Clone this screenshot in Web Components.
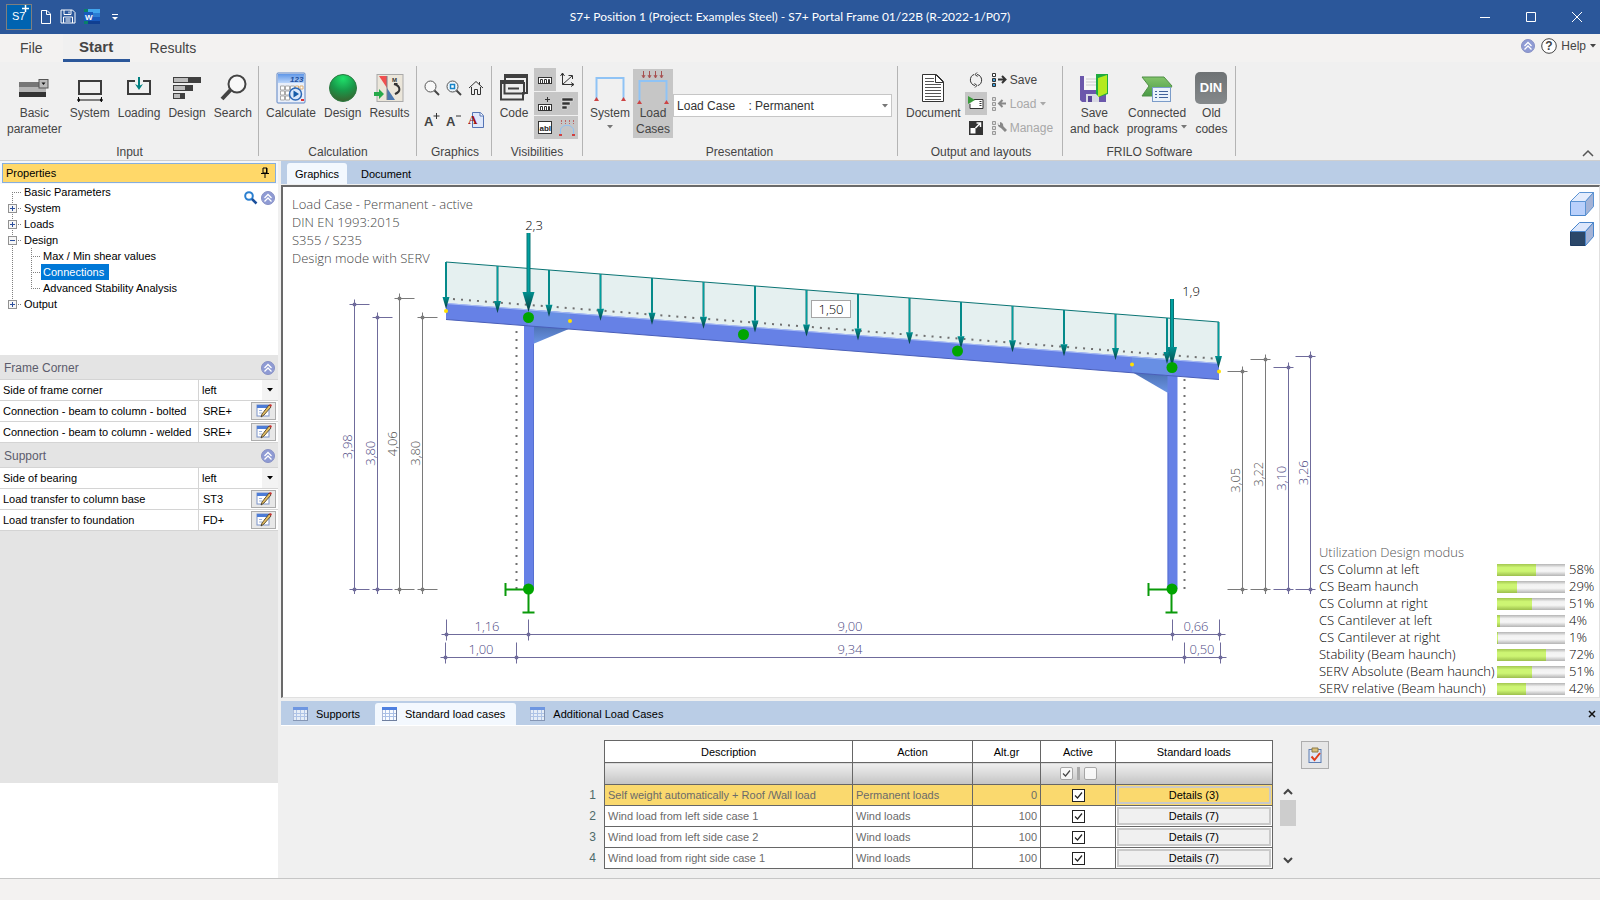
<!DOCTYPE html>
<html lang="en">
<head>
<meta charset="utf-8">
<title>S7+ Portal Frame</title>
<style>
  html, body {
    margin: 0;
    height: 100%;
  }
  body {
    background: #f0f0f0;
    color: #444;
    font: 12px/16px "Liberation Sans", Arial, sans-serif;
  }
</style>
</head>
<body>
<portal-app></portal-app>

<script>
const ICONS = {
  app: [26, 26, `<rect x=".5" y=".5" width="25" height="25" fill="#0063b1" stroke="#7f7f7f"/><text x="6" y="16" font-size="11" fill="#fff">S7</text><path d="M19.500 1v7M16 4.500h7" stroke="#fff" stroke-width="1.500"/>`],
  page: [12, 16, `<path d="M1.500 1.500h5.500l3.500 3.500v9.500h-9zM6.500 1.500v4h4" fill="none" stroke="#fff"/>`],
  disk: [16, 16, `<path d="M1 1h11.500l2.500 2.500V14H1zM4 1v4.500h7V1M9 2.500v2M3.500 14V8h9v6M5.500 10h5M5.500 12h5" fill="none" stroke="#fff"/>`],
  word: [16, 16, `<path d="M4 0h12v4H4z" fill="#41a5ee"/><path d="M4 4h12v4H4z" fill="#2b7cd3"/><path d="M4 8h12v4H4z" fill="#185abd"/><path d="M4 12h12v3H4z" fill="#103f91"/><path d="M0 0h4v3H0zM0 12h4v3H0z" fill="#0a8069"/><path d="M0 3h9v9H0z" fill="#185abd"/><text x="1" y="11" font-size="8" font-weight="bold" fill="#fff">W</text>`],
  quick: [6, 6, `<path d="M0 .500h6" stroke="#fff"/><path d="M0 3h6l-3 3z" fill="#fff"/>`],
  min: [10, 10, `<path d="M0 5.500h10" stroke="#fff"/>`],
  max: [10, 10, `<path d="M.5.500h9v9h-9z" fill="none" stroke="#fff"/>`],
  close: [10, 10, `<path d="M0 0l10 10M10 0L0 10" stroke="#fff"/>`],
  up: [14, 14, `<circle cx="7" cy="7" r="6.500" fill="#8f9bd4" stroke="#8790c4"/><path d="M3.500 7L7 3.500 10.500 7M3.500 10.500L7 7l3.500 3.500" fill="none" stroke="#fff" stroke-width="1.300"/>`],
  help: [16, 16, `<circle cx="8" cy="8" r="7.300" fill="#fff" stroke="#444"/><text x="8" y="12" font-size="12" font-weight="bold" text-anchor="middle" fill="#444">?</text>`],
  drop: [6, 4, `<path d="M0 0h6L3 3.500z" fill="currentColor"/>`],
  basic: [32, 32, `<path d="M1 10h27v5H1z" fill="#767676"/><path d="M1 15h27v5H1z" fill="#b5b5b5"/><path d="M1 20h27v5H1z" fill="#333"/><rect x="21" y="7.500" width="9" height="8.500" fill="#bbb" stroke="#555"/><path d="M23.500 10.500h4l-2 2.500z" fill="#111"/>`],
  system: [32, 32, `<rect x="5" y="9" width="22" height="13" fill="none" stroke="#3c3c3c" stroke-width="2"/><path d="M3 28h26M4.500 25v5M27.500 25v5" stroke="#111" stroke-width="1"/><path d="M3 28l3-1.500v3zM29 28l-3-1.500v3z" fill="#111"/>`],
  loading: [32, 32, `<path d="M12 9H5v13h22V9h-7" fill="none" stroke="#3c3c3c" stroke-width="2"/><path d="M16 5v10" stroke="#008080" stroke-width="2"/><path d="M12 12l4 2 4-2-4 6z" fill="#008080"/>`],
  design: [32, 32, `<path d="M2 5h28v6H2zM2 13h20v6H2zM2 21h12v6H2z" fill="#404040"/><path d="M3 6h14v4H3zM3 14h11v4H3zM3 22h6v4H3z" fill="#bcbcbc"/>`],
  search: [32, 32, `<circle cx="20" cy="12" r="8.500" fill="#f8f8f8" stroke="#444" stroke-width="2"/><path d="M13.500 18L5 27" stroke="#444" stroke-width="4"/>`],
  calculate: [32, 32, `<defs><linearGradient id="c" x2="0" y2="1"><stop stop-color="#5f97e8"/><stop offset="1" stop-color="#bcd6fa"/></linearGradient></defs><rect x="2" y="1" width="28" height="30" rx="1" fill="#e9effa" stroke="#5c84c4"/><path d="M3 2h26v9H3z" fill="url(#c)"/><text x="15" y="10" font-size="8" font-weight="bold" fill="#234f9c" font-style="italic">123</text><path d="M5.500 14h4v4h-4zM10.500 14h4v4h-4zM15.500 14h4v4h-4zM5.500 19h4v4h-4zM10.500 19h4v4h-4zM5.500 24h4v4h-4zM10.500 24h4v4h-4z" fill="#fff" stroke="#a9a9a9"/><path d="M20.500 14h3v3h-3zM25 14h3v3h-3z" fill="#fff" stroke="#dcae74"/><path d="M26 27h3v2h-3z" fill="#d33"/><circle cx="20.500" cy="22" r="6" fill="#d7e6fa" stroke="#2c67b4" stroke-width="1.500"/><path d="M18.500 18.500l5.500 3.500-5.500 3.500z" fill="#155ba8"/>`],
  ball: [32, 32, `<defs><radialGradient id="b" cx=".5" cy=".15" r=".9"><stop stop-color="#1fe06a"/><stop offset=".5" stop-color="#189a4a"/><stop offset="1" stop-color="#3d5c2c"/></radialGradient></defs><circle cx="16" cy="16" r="13.500" fill="url(#b)" stroke="#2b7a41"/>`],
  results: [32, 32, `<rect x="4" y="2.500" width="26" height="27" fill="#ebe6da" stroke="#aaa"/><path d="M6 4h8v12z" fill="#f04f4f"/><path d="M14 16l8 12h-8z" fill="#4b78b0"/><path d="M14 4v24" stroke="#7d7d8a"/><text x="19" y="10" font-size="6" font-weight="bold" fill="#333">M</text><path d="M21 12c7 2 7 8 1 10M21 12h3.500M22 22l3-2" fill="none" stroke="#333" stroke-width="2"/><path d="M1 20h5v-3l5 5-5 5v-3H1z" fill="#27a94a"/>`],
  zoomOut: [16, 16, `<circle cx="6.500" cy="6.500" r="5.500" fill="#f8f8f8" stroke="#555"/><path d="M10.500 10.500l4.500 4.500" stroke="#444" stroke-width="2"/>`],
  zoomFit: [16, 16, `<circle cx="6.500" cy="6.500" r="5.500" fill="#eef6fc" stroke="#555"/><path d="M10.500 10.500l4.500 4.500" stroke="#444" stroke-width="2"/><path d="M4.500 4.500h4v4h-4z" fill="#fff" stroke="#1584c8" stroke-width="1.500"/>`],
  home: [16, 16, `<path d="M1 8l7-6.500L15 8M3.500 7v7.500h3V9.500h3v5h3V7M11.500 2v3" fill="none" stroke="#333"/>`],
  fontUp: [16, 16, `<text x="0" y="14" font-size="13" font-weight="bold" fill="#444">A</text><path d="M12.500 1v6M9.500 4h6" stroke="#333"/>`],
  fontDown: [16, 16, `<text x="0" y="14" font-size="13" font-weight="bold" fill="#444">A</text><path d="M10 4h5" stroke="#333"/>`],
  fontPage: [16, 16, `<path d="M4.500.500h8l3 3v12h-11z" fill="#dfe8fb" stroke="#5574b5"/><path d="M12 .500v3.500h3.500" fill="#fff" stroke="#5574b5"/><text x="0" y="12" font-size="13" font-weight="bold" font-family="Liberation Serif, serif" fill="#a01010">A</text>`],
  code: [32, 32, `<path d="M6 2h24v20H26v-2h2V6H8v3H6z" fill="#404040"/><rect x="3" y="9.500" width="22" height="18" fill="#eee" stroke="#404040" stroke-width="2"/><path d="M2 8h24v4H2z" fill="#404040"/><path d="M6 12h21v8H6z" fill="#eee"/><path d="M6.500 10v11.500H26V10" fill="none" stroke="#404040" stroke-width="2"/><path d="M10 16.500h11" stroke="#404040" stroke-width="2"/>`],
  ruler: [16, 16, `<rect x="1.500" y="5.500" width="13" height="6" fill="#fff" stroke="#333"/><path d="M3.500 11V7.500h2V11M7.500 11V7.500h2V11M11.500 11V7.500h1V11" fill="none" stroke="#333"/>`],
  rulerPlus: [16, 16, `<rect x="1.500" y="8.500" width="13" height="6" fill="#fff" stroke="#333"/><path d="M3.500 14v-3.500h2V14M7.500 14v-3.500h2V14M11.500 14v-3.500h1V14" fill="none" stroke="#333"/><path d="M10.500 1v5M8 3.500h5" stroke="#333"/>`],
  axes: [16, 16, `<path d="M3.500 1v11.500H15M3.500 12.500L13 4M1.500 4l2-3 2 3M12 10.500l3 2-3 2M9.500 3.500H13.500V7" fill="none" stroke="#333"/>`],
  bars: [16, 16, `<path d="M3 2h11v3H3zM3 6h8v3H3zM3 10h5v3H3z" fill="#333" stroke="#eee" stroke-width=".5"/>`],
  abl: [16, 16, `<rect x="1.500" y="1.500" width="13" height="12" fill="#fff" stroke="#333"/><text x="2.500" y="11" font-size="8" font-weight="bold" fill="#222">abl</text>`],
  frameSmall: [16, 16, `<path d="M1.500 15V9c3-5 10-5 13 0v6" fill="none" stroke="#8fc3f5"/><path d="M2.500 0v4M6.500 0v4M10.500 0v4M14.500 0v4" stroke="#b66" stroke-dasharray="2 1"/><path d="M0 14h3v2H0zM13 14h3v2h-3z" fill="#d04040"/>`],
  frame: [32, 28, `<path d="M2.500 25V4h27V25" fill="none" stroke="#8fc3f5" stroke-width="2"/><path d="M0 27l2.500-4L5 27zM27 27l2.500-4L32 27z" fill="#c44"/>`],
  frameLoad: [32, 34, `<path d="M2.500 31V11h27V31" fill="none" stroke="#8fc3f5" stroke-width="2"/><path d="M0 34l2.500-4L5 34zM27 34l2.500-4L32 34z" fill="#c44"/><path d="M6.500 1v6M12.500 1v6M18.500 1v6M24.500 1v6M5 5l1.500 3L8 5M11 5l1.500 3L14 5M17 5l1.500 3L20 5M23 5l1.500 3L26 5" fill="none" stroke="#a75050"/>`],
  document: [32, 32, `<path d="M5.500 2.500h14l7 7v20h-21z" fill="#fff" stroke="#333"/><path d="M18.500 2.500v8h8z" fill="#fff" stroke="#333"/><path d="M8 6.500h9M8 9.500h9M8 12.500h16M8 15.500h16M8 18.500h16M8 21.500h16M8 24.500h16M8 27.500h16" stroke="#555"/>`],
  refresh: [16, 16, `<path d="M9 2.500c6 1 6 9.500 1 11M7 13.500c-6-1-6-9.500-1-11M9 .500L7 2.500l2.500 2M7 15.500l2-2-2.500-2" fill="none" stroke="#333"/>`],
  playFrame: [16, 16, `<path d="M6 3.500h9v9H2V8" fill="#fff" stroke="#333"/><path d="M12.500 5v6" stroke="#333" stroke-dasharray="1 1" stroke-width="2"/><path d="M0 0l7 4-7 4z" fill="#3b9b3b"/>`],
  expand: [16, 16, `<path d="M1 1h14v14H1z" fill="#333"/><path d="M2.500 8h5v5.500h-5z" fill="#fff"/><path d="M7.500 8l5-5M8.500 3h4v4" fill="none" stroke="#fff" stroke-width="1.500"/>`],
  saveList: [16, 16, `<path d="M1.500 1.500h3v3h-3z" fill="#fff" stroke="#333"/><path d="M1.500 6.500h3v3h-3zM1.500 11.500h3v3h-3z" fill="#3d9fdb" stroke="#333"/><path d="M7 7.500h7M11 4l3.500 3.500L11 11" fill="none" stroke="#333" stroke-width="2"/>`],
  loadList: [16, 16, `<path d="M1.500 1.500h3v3h-3zM1.500 6.500h3v3h-3zM1.500 11.500h3v3h-3z" fill="#ddd" stroke="#999"/><path d="M8 7.500h7M11.500 4L8 7.500l3.500 3.500" fill="none" stroke="#888" stroke-width="2"/>`],
  manageList: [16, 16, `<path d="M1.500 1.500h3v3h-3zM1.500 6.500h3v3h-3zM1.500 11.500h3v3h-3z" fill="#ddd" stroke="#999"/><path d="M9.500 5.500l5.500 5.500" stroke="#888" stroke-width="3"/><path d="M7 2.500c-1 4 2 6 5 4.500 1-3-1-4.500-3-5v3H7.500z" fill="#888"/>`],
  saveBack: [32, 32, `<path d="M2 4h26v26H4l-2-2z" fill="#6b57ab"/><path d="M6 4h14v14H6z" fill="#f6f6f6"/><path d="M8 7h10M8 10h10M8 13h10" stroke="#ccc"/><path d="M8 22h13v8H8z" fill="#d9d9e4"/><path d="M10 24h4v6h-4z" fill="#5a4798"/><path d="M18 2h12v20l-9 3-3-3z" fill="#1fab3f"/><path d="M20 6l9-3v18l-9 4z" fill="#b4ea1e"/>`],
  connected: [32, 32, `<defs><linearGradient id="g" x2="0" y2="1"><stop stop-color="#83c46a"/><stop offset="1" stop-color="#4a9a45"/></linearGradient></defs><path d="M1 5h22l8 9-7 10H1l7-10z" fill="url(#g)" stroke="#4f8f46"/><rect x="11.500" y="15.500" width="18" height="14" fill="#eaf2fb" stroke="#7b9cc9"/><path d="M14 19.500h2M14 22.500h2M14 25.500h2M18 19.500h9M18 22.500h9M18 25.500h9" stroke="#41639c"/>`],
  din: [32, 32, `<defs><linearGradient id="d" x2="0" y2="1"><stop stop-color="#6e7274"/><stop offset="1" stop-color="#85898b"/></linearGradient></defs><rect width="32" height="32" rx="5" fill="url(#d)"/><text x="16" y="20" font-size="13" font-weight="bold" text-anchor="middle" fill="#fff">DIN</text>`],
  chevron: [12, 8, `<path d="M1 7l5-5 5 5" fill="none" stroke="#555" stroke-width="1.500"/>`],
  chevronDown: [12, 8, `<path d="M2 1l4 4 4-4" fill="none" stroke="#444" stroke-width="2"/>`],
  chevronUp: [12, 8, `<path d="M2 6l4-4 4 4" fill="none" stroke="#444" stroke-width="2"/>`],
  pin: [8, 12, `<path d="M2 1h4v5H2zM0 6.500h8M4 6v5M5.500 1v5" fill="none" stroke="#000"/>`],
  find: [14, 14, `<circle cx="5" cy="5" r="3.800" fill="#fff" stroke="#2a7fd0" stroke-width="2"/><path d="M8 8l4.500 4.500" stroke="#1a4f9c" stroke-width="2.500"/>`],
  edit: [16, 14, `<rect x="1" y="1" width="12" height="11" fill="#fff" stroke="#7d93c8"/><path d="M1 1h12v3H1z" fill="#4d7cd6"/><path d="M3 6.500h3M3 9h3M8 6.500h3" stroke="#9db2dd"/><path d="M5 13l1-3 7-9 2 2-7 8z" fill="#e3bd62" stroke="#3d3320" stroke-width=".8"/><path d="M13 1l1-1 2 1-1 2z" fill="#c33"/>`],
  grid: [15, 14, `<path d="M.5.500h14v13H.5z" fill="#f8fbff" stroke="#aab8d8"/><path d="M0 0h15v3H0z" fill="#4f80e0"/><path d="M3.500 3v10M7.500 3v10M11.500 3v10M1 6.500h13M1 9.500h13" stroke="#a9bfe6"/><path d="M14.500 3v11M0 13.500h15" stroke="#6f7f9f"/>`],
  cross: [8, 8, `<path d="M1 1l6 6M7 1L1 7" stroke="#111" stroke-width="1.500"/>`],
  clipboard: [14, 16, `<rect x="1" y="2.500" width="12" height="13" fill="#dfe8f8" stroke="#5d7cb0"/><path d="M4 1h6v4H4z" fill="#d8bf7a" stroke="#8d7a44"/><path d="M3.500 9.500l3 3.500L12 6" fill="none" stroke="#e0401c" stroke-width="2"/>`],
  cubeLight: [24, 24, `<path d="M.5 9.500h15v14H.5z" fill="#b9d0fb" stroke="#4a86cc"/><path d="M.5 9.500l9-9h14l-8 9z" fill="#e4ecfc" stroke="#5b93d3"/><path d="M15.500 9.500l8-9v14l-8 9z" fill="#a4b3d6" stroke="#5b93d3"/>`],
  cubeDark: [24, 24, `<path d="M.5 9.500h15v14H.5z" fill="#2b4769" stroke="#1f3c63"/><path d="M.5 9.500l9-9h14l-8 9z" fill="#dde7fb" stroke="#4a86cc"/><path d="M15.500 9.500l8-9v14l-8 9z" fill="#a4b3d6" stroke="#4a86cc"/>`],
}

function icon(name) {
  const [w, h, body] = ICONS[name]
  return `<svg width="${w}" height="${h}" viewBox="0 0 ${w} ${h}" aria-hidden="true">${body}</svg>`
}

const RESET = `
  *, :host { box-sizing: border-box; }
  button, select, input { font: inherit; color: inherit; margin: 0; border-radius: 0; }
  button { background: none; border: 0; padding: 0; }
  svg { display: block; flex: none; }
`

class BaseElement extends HTMLElement {
  connectedCallback() {
    if (this.shadowRoot) return
    const shadow = this.attachShadow({ mode: 'open' })
    shadow.innerHTML = `<style>${RESET}${this.styles()}</style>${this.render()}`
  }
  styles() { return ':host { display: block; }' }
  render() { return '<slot></slot>' }
}

class TitleBar extends BaseElement {
  styles() {
    return `
      :host {
        display: grid;
        grid-template-columns: 1fr auto 1fr;
        align-items: center;
        height: 34px;
        padding-left: 6px;
        background: #2b579a;
        color: #fff;
      }
      .quick { display: flex; align-items: center; gap: 8px; }
      .quick button:last-child { padding: 0 4px; }
      h1 { margin: 0; padding-right: 26px; font: 12px/16px Lato, sans-serif; }
      .window { display: flex; justify-content: flex-end; }
      .window button { display: flex; justify-content: center; width: 46px; }
    `
  }
  render() {
    return `
      <div class="quick">
        ${icon('app')}
        <button aria-label="New">${icon('page')}</button>
        <button aria-label="Save">${icon('disk')}</button>
        <button aria-label="Word">${icon('word')}</button>
        <button aria-label="Customize">${icon('quick')}</button>
      </div>
      <h1><slot></slot></h1>
      <div class="window">
        <button aria-label="Minimize">${icon('min')}</button>
        <button aria-label="Maximize">${icon('max')}</button>
        <button aria-label="Close">${icon('close')}</button>
      </div>
    `
  }
}

class RibbonTabs extends BaseElement {
  styles() {
    return `
      :host { display: flex; height: 28px; background: #f3f2f1; font-size: 14px; }
      button { padding: 0 20px; }
      .active { width: 67px; padding: 0; border-bottom: 3px solid #2b579a; font-size: 15px; font-weight: bold; background: #f0f0f0; }
      .help { display: flex; align-items: center; gap: 4px; margin: 0 4px 5px auto; font-size: 12px; }
      .help button { display: flex; align-items: center; gap: 4px; padding: 0; }
      .help button:first-child { padding-right: 2px; }
    `
  }
  render() {
    return `
      <button>File</button>
      <button class="active">Start</button>
      <button>Results</button>
      <div class="help">
        <button aria-label="Collapse">${icon('up')}</button>
        <button>${icon('help')}Help ${icon('drop')}</button>
      </div>
    `
  }
}

class RibbonGroup extends BaseElement {
  styles() {
    return `
      :host {
        display: flex;
        flex-direction: column;
        height: 90px;
        padding: 0 2px 0 3px;
        border-right: 1px solid #b4b4b4;
      }
      .tools { display: flex; flex: 1; align-items: flex-start; }
      .title { height: 10px; line-height: 12px; text-align: center; }
    `
  }
  render() {
    return `<div class="tools"><slot></slot></div><div class="title">${this.getAttribute('label')}</div>`
  }
}

class RibbonButton extends BaseElement {
  styles() {
    return `
      :host { display: block; }
      button {
        display: flex;
        flex-direction: column;
        align-items: center;
        min-width: 34px;
        padding: 5px var(--button-gap, 4px) 0;
        line-height: 16px;
      }
      :host([pressed]) button { background: #c6c6c6; padding-top: 0; margin-top: 3px; min-height: 69px; }
      .icon { display: flex; align-items: center; height: 34px; }
      :host([pressed]) .icon { height: 36px; }
      .menu { color: #777; margin-top: 4px; }
      .inline { display: inline-block; color: #777; margin: 0 0 4px 4px; }
    `
  }
  render() {
    const menu = this.getAttribute('menu')
    return `
      <button>
        <span class="icon">${icon(this.getAttribute('icon'))}</span>
        <span>${this.getAttribute('label').replace('|', '<br>')}${menu === 'inline' ? icon('drop').replace('<svg', '<svg class="inline"') : ''}</span>
        ${menu === 'below' ? `<span class="menu">${icon('drop')}</span>` : ''}
      </button>
    `
  }
}

class ToolButton extends BaseElement {
  styles() {
    return `
      :host { display: block; }
      button {
        display: flex;
        align-items: center;
        justify-content: center;
        gap: 3px;
        width: 100%;
        min-width: 22px;
        height: 23px;
      }
      :host([text]) button { justify-content: flex-start; padding-left: 4px; }
      :host([pressed]) button { background: #c6c6c6; }
      :host([disabled]) button { color: #a8a8a8; }
      .menu { padding-left: 1px; }
    `
  }
  render() {
    const text = this.getAttribute('text') || ''
    const off = this.hasAttribute('disabled') ? 'disabled' : ''
    return `<button ${off} aria-label="${text || this.getAttribute('icon')}">${icon(this.getAttribute('icon'))}${text}${this.hasAttribute('menu') ? `<span class="menu">${icon('drop')}</span>` : ''}</button>`
  }
}

class RibbonBar extends BaseElement {
  styles() {
    return `
      :host {
        display: flex;
        height: 99px;
        padding-top: 4px;
        border-bottom: 1px solid #cfcfcf;
        background: #f0f0f0;
      }
      .grid { display: grid; gap: 1px 0; padding-top: 2px; }
      .three { grid-template-columns: repeat(3, 22px); gap: 9px 0; padding-top: 10px; }
      .two { grid-template-columns: repeat(2, 22px); }
      .input { width: 259px; }
      .calculation { width: 158px; }
      .graphics { width: 75px; padding-left: 4px; }
      .visibilities { width: 91px; padding-left: 2px; }
      .presentation { width: 315px; padding: 0 5px 0 4px; --button-gap: 3px; }
      .output { width: 165px; padding-left: 4px; }
      .frilo { width: 173px; }
      .case { display: flex; flex: 1; position: relative; align-items: center; margin-top: 28px; }
      select {
        flex: 1;
        height: 23px;
        padding: 0 4px 0 3px;
        border: 1px solid #c6c6c6;
        background: #fff;
        color: #333;
        appearance: none;
      }
      .case svg { position: absolute; right: 4px; color: #777; }
      .collapse { margin: auto 6px 3px auto; }
    `
  }
  render() {
    return `
      <ribbon-group class="input" label="Input">
        <ribbon-button icon="basic" label="Basic|parameter"></ribbon-button>
        <ribbon-button icon="system" label="System"></ribbon-button>
        <ribbon-button icon="loading" label="Loading"></ribbon-button>
        <ribbon-button icon="design" label="Design"></ribbon-button>
        <ribbon-button icon="search" label="Search"></ribbon-button>
      </ribbon-group>
      <ribbon-group class="calculation" label="Calculation">
        <ribbon-button icon="calculate" label="Calculate"></ribbon-button>
        <ribbon-button icon="ball" label="Design"></ribbon-button>
        <ribbon-button icon="results" label="Results"></ribbon-button>
      </ribbon-group>
      <ribbon-group class="graphics" label="Graphics">
        <div class="grid three">
          <tool-button icon="zoomOut"></tool-button>
          <tool-button icon="zoomFit"></tool-button>
          <tool-button icon="home"></tool-button>
          <tool-button icon="fontUp"></tool-button>
          <tool-button icon="fontDown"></tool-button>
          <tool-button icon="fontPage"></tool-button>
        </div>
      </ribbon-group>
      <ribbon-group class="visibilities" label="Visibilities">
        <ribbon-button icon="code" label="Code"></ribbon-button>
        <div class="grid two">
          <tool-button icon="ruler" pressed></tool-button>
          <tool-button icon="axes"></tool-button>
          <tool-button icon="rulerPlus" pressed></tool-button>
          <tool-button icon="bars" pressed></tool-button>
          <tool-button icon="abl" pressed></tool-button>
          <tool-button icon="frameSmall" pressed></tool-button>
        </div>
      </ribbon-group>
      <ribbon-group class="presentation" label="Presentation">
        <ribbon-button icon="frame" label="System" menu="below"></ribbon-button>
        <ribbon-button icon="frameLoad" label="Load|Cases" pressed></ribbon-button>
        <div class="case">
          <select aria-label="Load case"><option>Load Case&nbsp;&nbsp;&nbsp; : Permanent</option></select>
          ${icon('drop')}
        </div>
      </ribbon-group>
      <ribbon-group class="output" label="Output and layouts">
        <ribbon-button icon="document" label="Document"></ribbon-button>
        <div class="grid">
          <tool-button icon="refresh"></tool-button>
          <tool-button icon="playFrame" pressed></tool-button>
          <tool-button icon="expand"></tool-button>
        </div>
        <div class="grid">
          <tool-button icon="saveList" text="Save"></tool-button>
          <tool-button icon="loadList" text="Load" menu disabled></tool-button>
          <tool-button icon="manageList" text="Manage" disabled></tool-button>
        </div>
      </ribbon-group>
      <ribbon-group class="frilo" label="FRILO Software">
        <ribbon-button icon="saveBack" label="Save|and back"></ribbon-button>
        <ribbon-button icon="connected" label="Connected|programs" menu="inline"></ribbon-button>
        <ribbon-button icon="din" label="Old|codes"></ribbon-button>
      </ribbon-group>
      <button class="collapse" aria-label="Collapse ribbon">${icon('chevron')}</button>
    `
  }
}

// level, label, toggle state, vertical guide (top / bottom half), selected
const TREE = [
  [1, 'Basic Parameters', '', 'b'],
  [1, 'System', '+', 'tb'],
  [1, 'Loads', '+', 'tb'],
  [1, 'Design', '-', 'tb'],
  [2, 'Max / Min shear values', '', 'tb'],
  [2, 'Connections', '', 'tb', true],
  [2, 'Advanced Stability Analysis', '', 't'],
  [1, 'Output', '+', 't'],
]

function guide(lines, toggle, branch = true) {
  const dash = 'stroke="#808080" stroke-dasharray="1 1"'
  let body = ''
  if (lines.includes('t')) body += `<path d="M4.500 0v8" ${dash}/>`
  if (lines.includes('b')) body += `<path d="M4.500 8v8" ${dash}/>`
  if (branch) body += `<path d="M4 8.500h9" ${dash}/>`
  if (toggle) {
    body += `<rect x=".5" y="4.500" width="8" height="8" fill="#f6f6f6" stroke="#919191"/><path d="M2 8.500h5" stroke="#2b4f9c"/>`
    if (toggle === '+') body += '<path d="M4.500 6v5" stroke="#2b4f9c"/>'
  }
  return `<svg width="14" height="16" viewBox="0 0 14 16" aria-hidden="true">${body}</svg>`
}

class PropertyTree extends BaseElement {
  styles() {
    return `
      :host { display: flex; justify-content: space-between; min-height: 171px; background: #fff; color: #000; font-size: 11px; }
      ul { list-style: none; margin: 0; padding: 0 0 0 8px; }
      li { display: flex; height: 16px; line-height: 16px; }
      li.nested svg:nth-child(2) { margin-left: 5px; }
      span { padding: 0 5px 0 2px; white-space: nowrap; }
      .selected { background: #0078d7; color: #fff; }
      .actions { display: flex; gap: 3px; padding: 7px 3px; height: 28px; }
    `
  }
  render() {
    const rows = TREE.map(([level, label, toggle, lines, selected]) => `
      <li class="${level === 2 ? 'nested' : ''}">
        ${level === 2 ? guide('tb', '', false) : ''}${guide(lines, toggle)}
        <span class="${selected ? 'selected' : ''}">${label}</span>
      </li>`).join('')
    return `
      <ul>${rows}</ul>
      <div class="actions">
        <button aria-label="Find">${icon('find')}</button>
        <button aria-label="Collapse all">${icon('up')}</button>
      </div>
    `
  }
}

class PropertySection extends BaseElement {
  styles() {
    return `
      :host { display: block; }
      header {
        display: flex;
        align-items: center;
        justify-content: space-between;
        height: 25px;
        padding: 2px 3px 0 4px;
        border-bottom: 1px solid #d4d4d4;
        background: #e4e4e4;
        color: #5c5c6c;
        font-size: 12px;
      }
    `
  }
  render() {
    return `<header>${this.getAttribute('label')}<button aria-label="Collapse">${icon('up')}</button></header><slot></slot>`
  }
}

class PropertyRow extends BaseElement {
  styles() {
    return `
      :host {
        display: grid;
        grid-template-columns: 199px 1fr;
        height: 21px;
        border-bottom: 1px solid #d4d4d4;
        background: #fff;
        color: #000;
        font-size: 11px;
        line-height: 20px;
      }
      label { padding-left: 3px; border-right: 1px solid #d4d4d4; white-space: nowrap; }
      .value { display: flex; position: relative; align-items: center; min-width: 0; }
      input { flex: 1; width: 0; height: 20px; padding: 0 0 0 4px; border: 0; background: none; }
      select { flex: 1; height: 20px; padding: 0 0 0 3px; border: 0; background: none; appearance: none; }
      .arrow { display: flex; align-items: center; justify-content: center; width: 16px; height: 20px; margin-left: -16px; background: #f3f3f3; pointer-events: none; }
      button { display: flex; align-items: center; justify-content: center; width: 25px; height: 18px; margin-right: 2px; border: 1px solid #adadad; background: #e8e8e8; }
    `
  }
  render() {
    const value = this.getAttribute('value')
    const control = this.hasAttribute('choice')
      ? `<select id="field"><option>${value}</option></select><span class="arrow">${icon('drop')}</span>`
      : `<input id="field" value="${value}"><button aria-label="Edit">${icon('edit')}</button>`
    return `<label for="field">${this.getAttribute('label')}</label><div class="value">${control}</div>`
  }
}

class PropertyPanel extends BaseElement {
  styles() {
    return `
      :host { display: flex; flex-direction: column; background: #e4e4e4; }
      .head {
        display: flex;
        align-items: center;
        justify-content: space-between;
        height: 20px;
        margin: 2px 2px 1px;
        padding: 0 6px 0 3px;
        border: 1px solid #86aede;
        background: #ffd869;
        color: #000;
        font-size: 11px;
      }
      .top { background: #f4f7fc; }
      .rest { flex: 1; }
      .hint { height: 95px; background: #fff; }
    `
  }
  render() {
    return `
      <div class="top"><div class="head">Properties<button aria-label="Pin">${icon('pin')}</button></div></div>
      <property-tree></property-tree>
      <property-section label="Frame Corner">
        <property-row label="Side of frame corner" value="left" choice></property-row>
        <property-row label="Connection - beam to column - bolted" value="SRE+"></property-row>
        <property-row label="Connection - beam to column - welded" value="SRE+"></property-row>
      </property-section>
      <property-section label="Support">
        <property-row label="Side of bearing" value="left" choice></property-row>
        <property-row label="Load transfer to column base" value="ST3"></property-row>
        <property-row label="Load transfer to foundation" value="FD+"></property-row>
      </property-section>
      <div class="rest"></div>
      <div class="hint"></div>
    `
  }
}

const PURPLE = '#6f6b9b'
const GRAY = '#7a7a7a'

function verticalDim(x, top, label, color, side) {
  const [a, b] = side === 'left' ? [x - 5, x + 15] : [x - 15, x + 5]
  const mid = (top + 589) / 2
  return `
    <path d="M${x} ${top - 5}V594M${a} ${top}H${b}M${a} 589.500H${b}" stroke="${color}" fill="none"/>
    <circle cx="${x}" cy="${top}" r="2" fill="${color}"/><circle cx="${x}" cy="589.500" r="2" fill="${color}"/>
    <text transform="translate(${x - 3} ${mid}) rotate(-90)" text-anchor="middle" fill="${color === GRAY ? '#555' : '#4f4b85'}">${label}</text>
  `
}

function horizontalDim(y, ticks, labels) {
  const last = ticks[ticks.length - 1]
  return `
    <path d="M${ticks[0] - 5} ${y}H${last + 6}" stroke="${PURPLE}"/>
    ${ticks.map((x) => `<path d="M${x} ${y - 15}v21" stroke="${PURPLE}"/><circle cx="${x}" cy="${y}" r="2" fill="${PURPLE}"/>`).join('')}
    ${labels.map(([x, t]) => `<text x="${x}" y="${y - 4}" text-anchor="middle" fill="#4f4b85">${t}</text>`).join('')}
  `
}

function arrow(x, top, tip, shaft, width, head) {
  return `
    <path d="M${x} ${top}V${tip - head}" stroke="#0a7474" stroke-width="${shaft}"/>
    <path d="M${x} ${top}V${tip - head}" stroke="#00a0a0" stroke-width="${shaft / 2}"/>
    <path d="M${x - width / 2} ${tip - head}h${width}L${x} ${tip}z" fill="url(#head)"/>
  `
}

function support(x) {
  return `<path d="M${x - 23} 583v13M${x - 23} 589.500h23M${x} 589v23M${x - 6} 612.500h12" stroke="#0a9a0a" stroke-width="2" fill="none"/>`
}

class FrameDrawing extends BaseElement {
  styles() {
    return `
      :host { display: block; }
      svg { width: 100%; height: 100%; font: 300 13px "Open Sans", sans-serif; }
    `
  }
  render() {
    let loads = ''
    for (let i = 0; i < 16; i++) {
      loads += arrow(446 + i * 51.5, 262 + i * 4, 309 + i * 3.93, 2, 7, 12)
    }
    const nodes = [[528.5, 317.5], [743.5, 334.5], [957.5, 351], [1172, 367.5], [528.5, 589], [1172, 589]]
    const marks = [[446, 311], [570, 321], [1132, 364.5], [1219, 371.5]]
    return `
      <svg viewBox="283 187 1316 509" preserveAspectRatio="xMidYMin meet" role="img" aria-label="Portal frame">
        <defs>
          <linearGradient id="head" x2="0" y2="1"><stop stop-color="#009090"/><stop offset="1" stop-color="#043c3c"/></linearGradient>
          <linearGradient id="haunch" x2="0" y2="1"><stop stop-color="#4c70b4"/><stop offset="1" stop-color="#6b95e4"/></linearGradient>
        </defs>
        <path d="M446 262L1219 322v41L446 303z" fill="#e5f0f0"/>
        <path d="M446 262L1219 322" stroke="#0a7474"/>
        <path d="M453 299L1213 358.500" stroke="#707070" stroke-width="2" stroke-dasharray="2 6"/>
        <path d="M516.500 331V590M1184.500 379V590" stroke="#707070" stroke-width="2" stroke-dasharray="2 6"/>
        <path d="M533 325l37 3.500L533 344z" fill="url(#haunch)"/>
        <path d="M1168 375.500l-36-3.500 36 21z" fill="url(#haunch)"/>
        <path d="M524 320h10v269h-10zM1167.500 370h10v219h-10z" fill="#6681e6"/>
        <path d="M533.500 344V589M1168 393V589" stroke="#4c65c4" opacity=".6"/>
        <path d="M446 303L1219 363v16.500L446 319.500z" fill="#6681e6"/>
        <path d="M528 309.500l42 3.200v16.200l-42-3.200zM1132 356.500l40 3v16l-40-3z" fill="#688fe4"/>
        <path d="M446 319.500L1219 379.500" stroke="#4a5fb8"/>
        <path d="M446 303.500L1219 363.500" stroke="#a9bdf4"/>
        ${loads}
        ${arrow(528.5, 233, 312, 4, 12, 20)}
        ${arrow(1172, 299, 367, 4, 10, 20)}
        ${support(528.5)}${support(1171.5)}
        ${nodes.map(([x, y]) => `<circle cx="${x}" cy="${y}" r="5.500" fill="#00a500"/>`).join('')}
        ${marks.map(([x, y]) => `<circle cx="${x}" cy="${y}" r="2" fill="#ffe100"/>`).join('')}
        <rect x="811.500" y="300.500" width="39" height="17" fill="#fff" stroke="#a5a5a5"/>
        <g fill="#000">
          <text x="831" y="314" text-anchor="middle">1,50</text>
          <text x="534" y="230" text-anchor="middle">2,3</text>
          <text x="1191" y="296" text-anchor="middle">1,9</text>
        </g>
        ${verticalDim(354.5, 304.5, '3,98', PURPLE, 'left')}
        ${verticalDim(377.5, 317.5, '3,80', PURPLE, 'left')}
        ${verticalDim(399.5, 298.5, '4,06', GRAY, 'left')}
        ${verticalDim(422.5, 317.5, '3,80', GRAY, 'left')}
        ${verticalDim(1242.5, 371.5, '3,05', GRAY, 'right')}
        ${verticalDim(1265.5, 359.5, '3,22', GRAY, 'right')}
        ${verticalDim(1288.5, 367.5, '3,10', PURPLE, 'right')}
        ${verticalDim(1310.5, 356.5, '3,26', PURPLE, 'right')}
        ${horizontalDim(634.5, [446.5, 528.5, 1172.5, 1219.5], [[487, '1,16'], [850, '9,00'], [1196, '0,66']])}
        ${horizontalDim(657.5, [445.5, 516.5, 1184.5, 1220.5], [[481, '1,00'], [850, '9,34'], [1202, '0,50']])}
      </svg>
    `
  }
}

const UTILIZATION = [
  ['CS Column at left', 58],
  ['CS Beam haunch', 29],
  ['CS Column at right', 51],
  ['CS Cantilever at left', 4],
  ['CS Cantilever at right', 1],
  ['Stability (Beam haunch)', 72],
  ['SERV Absolute (Beam haunch)', 51],
  ['SERV relative (Beam haunch)', 42],
]

class UtilizationList extends BaseElement {
  styles() {
    return `
      :host { display: block; color: #000; }
      .title { color: #555; }
      .row { display: grid; grid-template-columns: 178px 68px 30px; align-items: center; white-space: nowrap; }
      .row span:last-child { padding-left: 4px; }
      .bar { height: 12px; background: linear-gradient(#b4b4b4, #f2f2f2 30%, #f6f6f6 60%, #b4b4b4); }
      .fill { height: 12px; background: linear-gradient(#a3c750, #cdf573 30%, #cdf573 60%, #9cbf4c); }
    `
  }
  render() {
    return `<div class="title">Utilization Design modus</div>` + UTILIZATION.map(([label, pct]) => `
      <div class="row">
        <span>${label}</span>
        <div class="bar" role="meter" aria-label="${label}" aria-valuenow="${pct}"><div class="fill" style="width: ${pct}%"></div></div>
        <span>${pct}%</span>
      </div>`).join('')
  }
}

class GraphicsView extends BaseElement {
  styles() {
    return `
      :host { display: flex; flex-direction: column; min-height: 0; }
      nav { display: flex; align-items: flex-end; height: 23px; padding-left: 6px; background: #bacde6; color: #000; font-size: 11px; }
      nav button { height: 21px; padding: 0 8px; }
      nav .active { border-radius: 3px 3px 0 0; background: #f3f8fe; }
      nav button:last-child { padding: 0 14px; }
      .canvas {
        position: relative;
        flex: 1;
        min-height: 0;
        margin-top: 1px;
        border: solid;
        border-width: 2px 1px 1px 2px;
        border-color: #6a6a6a #e0e0e0 #e0e0e0 #6a6a6a;
        background: #fff;
        font: 300 13px/18px "Open Sans", sans-serif;
      }
      frame-drawing { height: 100%; }
      .info { position: absolute; top: 8px; left: 9px; color: #444; }
      .cubes { position: absolute; top: 5px; right: 5px; display: grid; gap: 6px; }
      utilization-list { position: absolute; right: 4px; bottom: 0; line-height: 17px; }
    `
  }
  render() {
    return `
      <nav><button class="active">Graphics</button><button>Document</button></nav>
      <div class="canvas">
        <frame-drawing></frame-drawing>
        <div class="info">Load Case - Permanent - active<br>DIN EN 1993:2015<br>S355 / S235<br>Design mode with SERV</div>
        <div class="cubes">
          <button aria-label="Wireframe view">${icon('cubeLight')}</button>
          <button aria-label="Solid view">${icon('cubeDark')}</button>
        </div>
        <utilization-list></utilization-list>
      </div>
    `
  }
}

const LOAD_CASES = [
  ['Self weight automatically + Roof /Wall load', 'Permanent loads', 0, 3],
  ['Wind load from left side case 1', 'Wind loads', 100, 7],
  ['Wind load from left side case 2', 'Wind loads', 100, 7],
  ['Wind load from right side case 1', 'Wind loads', 100, 7],
]

class LoadCaseTable extends BaseElement {
  styles() {
    return `
      :host { display: flex; justify-content: center; padding: 14px 2px 9px 0; font-size: 11px; color: #000; }
      table { border-collapse: collapse; table-layout: fixed; width: 722px; }
      col.num { width: 54px; }
      col.desc { width: 248px; }
      col.action { width: 120px; }
      col.alt { width: 68px; }
      col.active { width: 75px; }
      th, td { height: 21px; padding: 0; border: 1px solid #666; line-height: 16px; }
      thead th, .filter td { height: 22px; font-weight: normal; background: #fff; }
      .filter td { background: linear-gradient(#efefef, #c4c4c4); }
      thead th:first-child, .filter td:first-child, tbody th { border: 0; background: none; }
      tbody th { padding-right: 8px; text-align: right; font-weight: normal; font-size: 12px; color: #4d6a6a; }
      tbody td { padding: 0 3px; background: #fff; color: #6a6a6a; }
      .current td { background: #fad96e; }
      .right { text-align: right; }
      .check { text-align: center; }
      td.details { padding: 1px; }
      .details button { display: block; width: 100%; height: 18px; padding-bottom: 1px; border: 2px solid #c9c9c9; line-height: 12px; color: #000; background: #f0f0f0; }
      .current .details button { background: #fad96e; }
      input { appearance: none; display: block; width: 13px; height: 13px; margin: 0 auto; border: 1px solid #222; background: #fff; }
      input:checked { background: #fff url('data:image/svg+xml,<svg xmlns="http://www.w3.org/2000/svg" viewBox="0 0 11 11"><path d="M2 5.500L4.500 8 9 2.500" fill="none" stroke="%23222" stroke-width="1.200"/></svg>'); }
      .pair { display: flex; align-items: center; justify-content: center; gap: 4px; }
      .pair input { margin: 0; border-color: #999; border-radius: 2px; opacity: 0.8; }
      .pair i { width: 3px; height: 13px; background: #aaa; }
      .scroll { display: flex; flex-direction: column; align-items: center; width: 16px; height: 84px; margin: 45px 0 0 7px; }
      .scroll button { height: 8px; margin: 3px 0 4px; }
      .scroll button:last-child { margin: auto 0 4px; }
      .thumb { width: 16px; height: 26px; background: #cdcdcd; }
      .apply { display: flex; align-items: center; justify-content: center; width: 28px; height: 28px; margin: 1px 0 0 5px; border: 1px solid #adadad; background: #e6e6e6; }
    `
  }
  render() {
    const rows = LOAD_CASES.map(([desc, action, alt, n], i) => `
      <tr class="${i === 0 ? 'current' : ''}">
        <th scope="row">${i + 1}</th>
        <td>${desc}</td>
        <td>${action}</td>
        <td class="right">${alt}</td>
        <td class="check"><input type="checkbox" aria-label="Active ${i + 1}" checked></td>
        <td class="details"><button>Details (${n})</button></td>
      </tr>`).join('')
    return `
      <table>
        <colgroup><col class="num"><col class="desc"><col class="action"><col class="alt"><col class="active"><col></colgroup>
        <thead>
          <tr><th></th><th>Description</th><th>Action</th><th>Alt.gr</th><th>Active</th><th>Standard loads</th></tr>
          <tr class="filter"><td></td><td></td><td></td><td></td><td><div class="pair"><input type="checkbox" aria-label="All active" checked><i></i><input type="checkbox" aria-label="None active"></div></td><td></td></tr>
        </thead>
        <tbody>${rows}</tbody>
      </table>
      <div class="scroll">
        <button aria-label="Scroll up">${icon('chevronUp')}</button>
        <div class="thumb"></div>
        <button aria-label="Scroll down">${icon('chevronDown')}</button>
      </div>
      <button class="apply" aria-label="Apply">${icon('clipboard')}</button>
    `
  }
}

class LoadCasePanel extends BaseElement {
  styles() {
    return `
      :host { display: block; margin-top: 3px; }
      nav { display: flex; align-items: flex-end; height: 25px; padding-right: 4px; border-bottom: 1px solid #fff; background: #bacde6; color: #000; font-size: 11px; }
      nav button { display: flex; align-items: center; gap: 8px; height: 22px; padding: 0 14px; }
      nav .tab:first-child { padding: 0 15px 0 12px; }
      nav .tab:not(.active) svg { opacity: 0.7; }
      nav .active { padding: 0 11px 0 7px; border-radius: 3px 3px 0 0; background: #f3f8fe; }
      nav .close { margin-left: auto; padding: 0; }
    `
  }
  render() {
    return `
      <nav>
        <button class="tab">${icon('grid')}Supports</button>
        <button class="tab active">${icon('grid')}Standard load cases</button>
        <button class="tab">${icon('grid')}Additional Load Cases</button>
        <button class="close" aria-label="Close">${icon('cross')}</button>
      </nav>
      <load-case-table></load-case-table>
    `
  }
}

class PortalApp extends BaseElement {
  styles() {
    return `
      :host { display: flex; flex-direction: column; min-height: 100vh; }
      main { display: grid; grid-template-columns: 278px minmax(0, 1fr); gap: 3px; flex: 1; min-height: 0; }
      .work { display: flex; flex-direction: column; min-height: 0; }
      graphics-view { flex: 1; }
      footer { height: 22px; border-top: 1px solid #c6c6c6; background: #f3f2f1; }
    `
  }
  render() {
    return `
      <title-bar>S7+ Position 1 (Project: Examples Steel) - S7+ Portal Frame 01/22B (R-2022-1/P07)</title-bar>
      <ribbon-tabs></ribbon-tabs>
      <ribbon-bar></ribbon-bar>
      <main>
        <property-panel></property-panel>
        <div class="work">
          <graphics-view></graphics-view>
          <load-case-panel></load-case-panel>
        </div>
      </main>
      <footer></footer>
    `
  }
}

customElements.define('title-bar', TitleBar)
customElements.define('ribbon-tabs', RibbonTabs)
customElements.define('ribbon-group', RibbonGroup)
customElements.define('ribbon-button', RibbonButton)
customElements.define('tool-button', ToolButton)
customElements.define('ribbon-bar', RibbonBar)
customElements.define('property-tree', PropertyTree)
customElements.define('property-section', PropertySection)
customElements.define('property-row', PropertyRow)
customElements.define('property-panel', PropertyPanel)
customElements.define('frame-drawing', FrameDrawing)
customElements.define('utilization-list', UtilizationList)
customElements.define('graphics-view', GraphicsView)
customElements.define('load-case-table', LoadCaseTable)
customElements.define('load-case-panel', LoadCasePanel)
customElements.define('portal-app', PortalApp)
</script>
</body>
</html>
